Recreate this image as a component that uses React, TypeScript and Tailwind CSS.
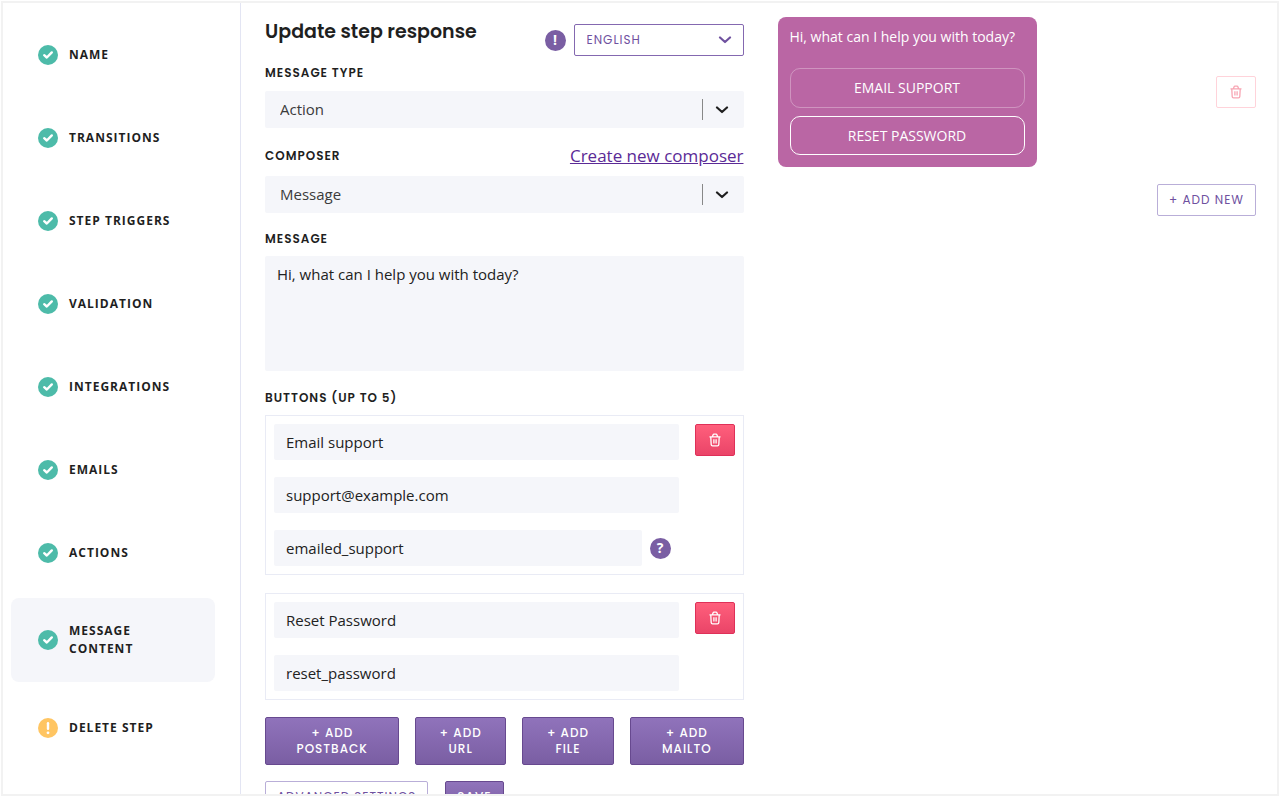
import { useState } from "react";
import type { ReactNode } from "react";

type StepStatus = "done" | "warning";

const steps: { label: string; status: StepStatus }[] = [
  { label: "Name", status: "done" },
  { label: "Transitions", status: "done" },
  { label: "Step triggers", status: "done" },
  { label: "Validation", status: "done" },
  { label: "Integrations", status: "done" },
  { label: "Emails", status: "done" },
  { label: "Actions", status: "done" },
  { label: "Message content", status: "done" },
  { label: "Delete step", status: "warning" },
];

const heading = "font-[Poppins,Inter,sans-serif]";
const outlineButton =
  "rounded-xs border border-[#b9aed8] bg-white text-xs leading-4 tracking-[1px] uppercase text-[#6f519f]";
const solidButton =
  "rounded-xs border border-[#67498f] bg-linear-to-b from-[#9073bb] to-[#7a5ea3] text-xs leading-4 tracking-[1px] uppercase font-medium text-white";

function StatusIcon({ status }: { status: StepStatus }) {
  return (
    <svg viewBox="0 0 20 20" className="size-5 shrink-0" aria-hidden="true">
      <circle cx="10" cy="10" r="10" fill={status === "done" ? "#4dbba9" : "#ffc562"} />
      {status === "done" ? (
        <path
          d="M6.2 10.2 8.8 12.5 13.8 7.4"
          fill="none"
          stroke="#fff"
          strokeWidth="2.4"
          strokeLinecap="round"
          strokeLinejoin="round"
        />
      ) : (
        <>
          <path d="M10 5.2v5.6" stroke="#fff" strokeWidth="2.4" strokeLinecap="round" />
          <circle cx="10" cy="14.8" r="1.4" fill="#fff" />
        </>
      )}
    </svg>
  );
}

function TrashIcon() {
  return (
    <svg
      viewBox="0 0 12 14"
      className="h-3.5 w-3"
      fill="none"
      stroke="currentColor"
      strokeWidth="1.3"
      strokeLinejoin="round"
      aria-hidden="true"
    >
      <path d="M0.5 3.9h11M3.4 3.7 4 2q.3-.8 1-.8h2q.7 0 1 .8l.6 1.7M1.8 4.1l.4 7.5q.1 1.2 1.3 1.2h5q1.2 0 1.3-1.2l.4-7.5" />
      <path d="M4.9 6.2v4.2M7.1 6.2v4.2" />
    </svg>
  );
}

function Chevron() {
  return (
    <svg viewBox="0 0 14 8" className="h-2 w-3.5" aria-hidden="true">
      <path
        d="M2 1.5 7 6l5-4.5"
        fill="none"
        stroke="currentColor"
        strokeWidth="2.2"
        strokeLinecap="round"
        strokeLinejoin="round"
      />
    </svg>
  );
}

function Badge({ children }: { children: ReactNode }) {
  return (
    <span className="flex size-[21px] shrink-0 items-center justify-center rounded-full bg-[#7a5ea3] text-sm leading-4 font-bold text-white">
      {children}
    </span>
  );
}

function SelectField({ id, value }: { id: string; value: string }) {
  return (
    <div className="relative">
      <select
        id={id}
        defaultValue={value}
        className="block h-[37px] w-full appearance-none rounded-xs bg-[#f5f6fa] px-[15px] text-[15px] text-[#3b3b3b]"
      >
        <option>{value}</option>
      </select>
      <span className="pointer-events-none absolute inset-y-2 right-0 flex w-[42px] items-center border-l border-[#888] pl-3 text-[#1f1f1f]">
        <Chevron />
      </span>
    </div>
  );
}

function TextField({ label, value }: { label: string; value: string }) {
  return (
    <input
      aria-label={label}
      defaultValue={value}
      className="block h-9 w-full min-w-0 rounded-xs bg-[#f5f6fa] px-3 text-[15px] text-[#222]"
    />
  );
}

function ButtonCard({ children }: { children: ReactNode }) {
  return (
    <div className="flex items-start gap-4 border border-[#e9ebf5] p-2">
      <div className="flex flex-1 flex-col gap-[17px]">{children}</div>
      <button
        aria-label="Delete button"
        className="flex h-8 w-10 items-center justify-center rounded-xs border border-[#df3058] bg-linear-to-b from-[#ff5f7c] to-[#ea4468] text-white"
      >
        <TrashIcon />
      </button>
    </div>
  );
}

export default function App() {
  const [active, setActive] = useState("Message content");
  const [message, setMessage] = useState("Hi, what can I help you with today?");
  const labelClass = `${heading} block text-xs leading-5 font-semibold tracking-[1px] uppercase`;

  return (
    <div className="h-screen bg-white p-px font-['Open_Sans',sans-serif] text-[#1f1f1f]">
      <div className="flex h-full overflow-hidden border-2 border-[#f2f2f2]">
        <nav className="w-[238px] shrink-0 border-r border-[#e3e5f3] pt-3.5 pr-[25px] pl-2">
          <ul className="flex flex-col gap-2">
            {steps.map((s) => (
              <li key={s.label}>
                <button
                  onClick={() => setActive(s.label)}
                  className={`flex min-h-[75px] w-full items-center gap-[11px] rounded-lg py-6 pr-16 pl-[27px] text-left text-xs leading-[18px] font-bold tracking-[1px] uppercase ${
                    s.label === active ? "bg-[#f5f6fa]" : ""
                  }`}
                >
                  <StatusIcon status={s.status} />
                  <span className={s.label === active ? "" : "whitespace-nowrap"}>{s.label}</span>
                </button>
              </li>
            ))}
          </ul>
        </nav>

        <main className="grid flex-1 grid-cols-2 items-start gap-x-[34px] pt-3.5 pr-[21px] pl-6">
          <form className="pt-0.5" onSubmit={(e) => e.preventDefault()}>
            <div className="flex items-start justify-between">
              <h1 className={`${heading} text-[19px] leading-[26px] font-semibold`}>Update step response</h1>
              <div className="flex items-center gap-2 pt-[5px]">
                <Badge>!</Badge>
                <div className="relative text-[#6f519f]">
                  <select
                    aria-label="Language"
                    defaultValue="English"
                    className={`${heading} block h-8 w-[170px] appearance-none rounded-xs border border-[#8468b0] bg-white px-3 text-xs tracking-[1px] uppercase`}
                  >
                    <option>English</option>
                  </select>
                  <span className="pointer-events-none absolute inset-y-0 right-3 flex items-center">
                    <Chevron />
                  </span>
                </div>
              </div>
            </div>

            <label htmlFor="message-type" className={`${labelClass} mt-[7px] mb-2`}>
              Message type
            </label>
            <SelectField id="message-type" value="Action" />

            <div className="mt-[18px] mb-2.5 flex h-5 items-center justify-between">
              <label htmlFor="composer" className={labelClass}>
                Composer
              </label>
              <a href="#composer" className="text-[17px] leading-5 text-[#5b2a96] underline">
                Create new composer
              </a>
            </div>
            <SelectField id="composer" value="Message" />

            <label htmlFor="message" className={`${labelClass} mt-4 mb-[7px]`}>
              Message
            </label>
            <textarea
              id="message"
              value={message}
              onChange={(e) => setMessage(e.target.value)}
              className="block h-[115px] w-full resize-none rounded-xs bg-[#f5f6fa] px-3 py-2 text-[15px] leading-5 text-[#222]"
            />

            <h2 className={`${labelClass} mt-[17px] mb-[7px]`}>Buttons (up to 5)</h2>
            <div className="flex flex-col gap-[18px]">
              <ButtonCard>
                <TextField label="Button text" value="Email support" />
                <TextField label="Email address" value="support@example.com" />
                <div className="flex items-center gap-2 pr-2">
                  <TextField label="Payload" value="emailed_support" />
                  <Badge>?</Badge>
                </div>
              </ButtonCard>
              <ButtonCard>
                <TextField label="Button text" value="Reset Password" />
                <TextField label="Payload" value="reset_password" />
              </ButtonCard>
            </div>

            <div className={`${heading} mt-[17px] mb-4 grid grid-cols-[134fr_90fr_92fr_113fr] gap-4`}>
              {["Postback", "URL", "File", "Mailto"].map((kind) => (
                <button key={kind} className={`${solidButton} h-12`}>
                  + Add
                  <br />
                  {kind}
                </button>
              ))}
            </div>
            <div className={`${heading} flex gap-[17px]`}>
              <button className={`${outlineButton} h-8 px-[11px]`}>Advanced settings</button>
              <button className={`${solidButton} h-8 px-[11px]`}>Save</button>
            </div>
          </form>

          <section aria-label="Preview">
            <div className="flex items-center justify-between">
              <div className="w-[259px] rounded-lg bg-[#ba66a4] p-3 text-sm font-medium text-white">
                <p className="mb-[23px] leading-4">{message}</p>
                <div className="flex flex-col gap-2">
                  <button className="h-10 rounded-[10px] border border-white/30 uppercase">Email support</button>
                  <button className="h-[39px] rounded-[10px] border border-white uppercase">Reset password</button>
                </div>
              </div>
              <button
                aria-label="Delete message"
                className="flex h-8 w-10 items-center justify-center rounded-xs border border-[#ffd3da] text-[#f8a5b3]"
              >
                <TrashIcon />
              </button>
            </div>
            <div className={`${heading} mt-[17px] flex justify-end`}>
              <button className={`${outlineButton} h-8 px-[11px]`}>+ Add new</button>
            </div>
          </section>
        </main>
      </div>
    </div>
  );
}
